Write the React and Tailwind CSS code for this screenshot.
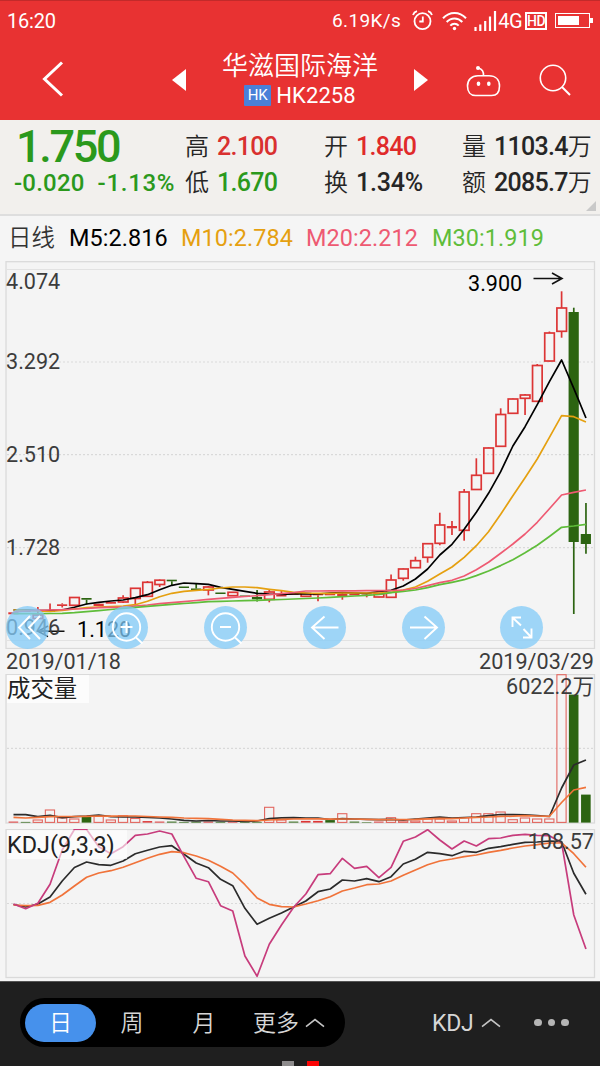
import React from "react";

const RED = "#dc3535";
const GREEN = "#2c6411";

// x position of the n-th trading day
const dayX = (i) => 13.5 + i * 12.18;

// [body top, body bottom, high, low, up]
const candles = [
  [612.3, 614.3, 612, 614, 1],
  [610.2, 612, 610, 612, 1],
  [615, 618.5, 607, 618.5, 1],
  [610.5, 612, 603.5, 612, 1],
  [604.3, 606, 603.3, 607.5, 1],
  [597.5, 605.3, 597.5, 605.3, 1],
  [598, 599.7, 598, 604.5, 0],
  [603.7, 606, 603.5, 606, 1],
  [602, 603.7, 602, 604, 1],
  [598, 602, 595.3, 603, 1],
  [588.3, 598.5, 588, 605.5, 1],
  [582.3, 596.3, 581, 596.5, 1],
  [580.2, 584.5, 579.5, 587, 1],
  [579.7, 581.3, 580, 586, 0],
  [586.5, 588, 586.5, 588, 0],
  [588.5, 590, 584, 590, 0],
  [587, 590, 586, 595.3, 1],
  [592.5, 594, 592.5, 594, 0],
  [592.3, 595.7, 592, 596, 1],
  [595.5, 597, 595.5, 597, 0],
  [597, 599.3, 590, 601.5, 0],
  [592, 599.3, 590, 602.3, 1],
  [594.3, 596.5, 590, 596.5, 1],
  [593.3, 594.8, 593, 595, 1],
  [593.5, 596.3, 593, 596.5, 1],
  [593.3, 595.3, 593, 601.3, 1],
  [593.7, 595.3, 594, 595, 1],
  [593.8, 596, 593, 599.7, 1],
  [593.7, 595.3, 594, 595, 1],
  [593, 594.5, 593, 597.3, 1],
  [593.7, 597, 593, 597.3, 1],
  [580, 597.3, 574.5, 597.5, 1],
  [569, 578.3, 568.5, 580.7, 1],
  [560.7, 567.7, 556.7, 568, 1],
  [543.7, 557.3, 543, 562.7, 1],
  [525, 543.3, 512.7, 545.3, 1],
  [526, 528.3, 521, 535, 1],
  [492, 530.3, 489, 540.7, 1],
  [475.3, 489.5, 458.3, 490, 1],
  [448, 473.3, 447.5, 474, 1],
  [414.5, 446.3, 408.3, 447, 1],
  [399, 413.3, 398.5, 414, 1],
  [395, 398.3, 394, 415, 1],
  [365.5, 401.3, 364, 402, 1],
  [333, 361, 331.5, 361.5, 1],
  [308, 331.3, 291.3, 337.7, 1],
  [312, 542, 307.7, 614, 0],
  [534, 544, 503, 553.7, 0],
];

const ma5 = [610, 610, 610.5, 610.5, 610, 607.3, 604, 602.3, 601, 600, 597.7, 594.7, 589.7, 585.3, 583, 583.7, 584.3, 587.3, 589.3, 591.3, 593.3, 594, 594.3, 594, 593.7, 594, 593, 592.5, 593, 593.3, 591.5, 590.3, 586, 579, 569, 555, 544.3, 529.3, 512.3, 493.3, 471.7, 446, 426.7, 404.7, 381.7, 360, 388.3, 418];
const ma10 = [610, 610.3, 611, 611.5, 610.5, 609, 607.7, 607, 606.5, 606, 604.7, 601.3, 596.7, 593.3, 591.3, 590.3, 589.3, 588, 587, 587, 587.7, 589.3, 590.7, 592.3, 593, 593.3, 593.3, 593, 593, 593, 593, 592.3, 590, 587, 581.3, 574, 567, 557.3, 545.7, 531.7, 514.3, 495.7, 477.7, 459, 437.3, 415.7, 416.7, 422];
const ma20 = [612, 611, 610.3, 610, 609.7, 609, 608.5, 607.7, 607.3, 607, 606, 605, 603.7, 602.7, 601.7, 600.5, 599.3, 598.3, 597.3, 596.5, 595.7, 594.7, 593.7, 592.5, 591, 591, 590.8, 590.8, 590.8, 590.7, 590.7, 590.5, 590, 588.5, 585.7, 582.7, 580.3, 576, 569.7, 562.3, 553.3, 544, 534, 522.3, 508.7, 495, 492.3, 490];
const ma30 = [613.7, 613.7, 613.7, 613.5, 613.3, 612.7, 611.7, 610.7, 609.5, 608.3, 607.3, 606.3, 605.3, 604.3, 603.5, 602.6, 601.7, 601.3, 601, 600.6, 600.3, 599.8, 599.5, 599, 598.5, 598, 597.4, 596.7, 596, 595.3, 594.5, 592.7, 591.5, 590, 587.7, 584.7, 582.3, 579.7, 575.6, 571, 565.6, 559.7, 552.8, 545.3, 536.5, 527.3, 526, 524.3];

// [bar top, up]
const volumes = [
  [822, 1], [822.3, 0], [820, 1], [810, 1], [818, 1], [819, 1], [817, 0], [816, 1],
  [820, 1], [815.7, 1], [818.5, 1], [821.5, 1], [822, 1], [822, 0], [822.3, 0], [822, 0],
  [822, 1], [822.3, 0], [822, 1], [822.3, 0], [822.3, 0], [807.3, 1], [820, 1], [822, 0],
  [821.3, 1], [821.3, 1], [820.5, 0], [813.7, 1], [822, 0], [822.5, 0], [822, 1], [817.7, 1],
  [821, 1], [821, 1], [819, 1], [819, 1], [821, 1], [817.7, 1], [813.7, 1], [813.7, 1],
  [812, 1], [819.7, 1], [818, 1], [819, 1], [819, 1], [674.7, 1], [695, 0], [795, 0],
];
const volMa5 = [814.7, 814.7, 816.7, 815.3, 817.7, 816.7, 816, 815, 816.7, 817, 817, 817.5, 818, 819, 820.3, 821, 820.5, 821, 821, 821.5, 821, 818.7, 817.9, 817.7, 818, 818, 819.5, 818.7, 819, 819.3, 819.7, 819.3, 820, 819, 818, 817, 818, 817.5, 817, 815.7, 814.5, 814.6, 814.8, 815.7, 816.5, 788, 765, 760];
const volMa10 = [817.3, 818, 817.3, 816.7, 816.5, 816.5, 816.3, 816, 816.2, 816, 816, 816.5, 817, 817.3, 818, 818.3, 818.7, 819.3, 820, 820.3, 820.7, 820, 819.3, 819, 818.9, 818.9, 819.2, 819, 819, 819.3, 819.7, 819.7, 819.5, 819.3, 818.8, 818.3, 818.6, 818, 817.3, 817, 816.4, 816.2, 815.7, 816, 816.3, 802.5, 790, 787.3];

const kLine = [904.5, 907, 904, 897, 881, 867.5, 862, 864.7, 865.3, 861, 853.7, 850.3, 847, 845.7, 854.3, 863, 867.7, 879.3, 885.7, 908.3, 924.3, 918.3, 913, 907, 901, 891.7, 889, 880, 881, 878.7, 881.7, 876.7, 864, 859.3, 852.3, 853.7, 855.7, 851.3, 852.3, 848.3, 846.7, 844.3, 842.3, 842, 841, 841.7, 873.3, 894.3];
const dLine = [905, 905.7, 905.3, 902.3, 895, 886, 877.3, 873, 870.7, 867.3, 862.7, 858.3, 854.3, 851.7, 852.7, 856, 860.3, 866.3, 873, 884.7, 898, 904.3, 906.7, 907, 904, 900.7, 896.7, 891, 888, 884.7, 884, 881, 875.3, 870, 864.7, 861, 859, 856.7, 855, 852.3, 850.3, 848, 846, 844.7, 843, 843, 853.7, 867.3];
const jLine = [904, 908.7, 903.3, 884.3, 850, 829.5, 829.5, 846.7, 853.7, 846.7, 835.3, 834, 831, 834, 856.7, 878.3, 881.7, 905.7, 911, 956, 976.3, 944.3, 925, 907.3, 894, 874.7, 873.7, 858.3, 868.3, 866.3, 877.7, 867.3, 841.3, 837, 829.7, 840, 849, 841, 846, 838.7, 838, 835.3, 834.3, 835.3, 835.7, 842.7, 915, 949];

const Line = ({ data, color }) => (
  <polyline
    points={data.map((y, i) => `${dayX(i)},${y}`).join(" ")}
    fill="none"
    stroke={color}
    strokeWidth="1.7"
    strokeLinejoin="round"
  />
);

const Grid = ({ ys }) =>
  ys.map((y) => (
    <line key={y} x1="7" x2="594" y1={y} y2={y} stroke="#d9d9d9" strokeWidth="1.2" strokeDasharray="2 2" />
  ));

const Candle = ({ i, data }) => {
  const [top, bottom, high, low, up] = data;
  const x = dayX(i);
  const color = up ? RED : GREEN;
  const hollow = up && bottom - top > 2.5;
  return (
    <g stroke={color} strokeWidth="1.7">
      {high < top && <line x1={x} x2={x} y1={high} y2={top} />}
      {low > bottom && <line x1={x} x2={x} y1={bottom} y2={low} />}
      {hollow ? (
        <rect x={x - 4.7} y={top} width="9.6" height={bottom - top} fill="none" />
      ) : (
        <rect x={x - 5.2} y={top} width="10.2" height={bottom - top} fill={color} stroke="none" />
      )}
    </g>
  );
};

const Volume = ({ i, data }) => {
  const [top, up] = data;
  const x = dayX(i) - 4.7;
  if (up && top < 821.2) {
    return <rect x={x} y={top} width="9.2" height={822.4 - top} fill="none" stroke="#e2665f" strokeWidth="1.1" />;
  }
  return <rect x={x - 0.2} y={top - 0.4} width="9.6" height={823 - top} fill={up ? RED : GREEN} />;
};

const ToolButton = ({ children }) => (
  <button className="flex size-[43px] items-center justify-center rounded-full bg-[#82cbf8]/75">
    <svg width="43" height="43" viewBox="0 0 43 43" fill="none" stroke="#fff" strokeWidth="1.9">
      {children}
    </svg>
  </button>
);

const Caret = () => (
  <svg width="20" height="10" viewBox="0 0 20 10" fill="none" stroke="#c4c4c4" strokeWidth="1.6">
    <path d="M1 8.7 10 1.6 19 8.7" />
  </svg>
);

const StatusBar = () => (
  <div className="flex h-[40px] items-center justify-between border-t border-[#c22a2a] pl-[7px] pr-[7px] text-[20px] leading-none">
    <span className="tracking-[-0.2px]">16:20</span>
    <div className="flex items-center">
      <span className="mr-[11px] text-[19px] tracking-[0.4px]">6.19K/s</span>
      <svg className="mr-[9px]" width="21" height="21" viewBox="0 0 21 21" fill="none" stroke="#fff" strokeWidth="1.8">
        <circle cx="10.5" cy="11.2" r="8" />
        <path d="M10.8 6.5v5H7.3M1 5C1.6 3.2 3.2 1.7 5 1.2M20 5c-.6-1.8-2.2-3.3-4-3.8" />
      </svg>
      <svg className="mr-[7px]" width="25" height="20" viewBox="0 0 25 20" fill="none" stroke="#fff" strokeWidth="2">
        <path d="M1 7.2c6.5-7 16.5-7 23 0M4.700 11c4.400-4.700 11.200-4.700 15.600 0M8.300 14.600c2.400-2.500 6-2.500 8.400 0" />
        <circle cx="12.5" cy="17.500" r="1.700" fill="#fff" stroke="none" />
      </svg>
      <svg width="23" height="20" viewBox="0 0 23 20" stroke="#fff" strokeWidth="2.200">
        <path d="M1.500 20v-4M6.300 20v-6.500M11.200 20V10M16 20V5.500M21 20V0" />
      </svg>
      <span className="ml-[1px] mr-[3px] text-[20px] tracking-[-0.600px]">4G</span>
      <div className="mr-[8px] flex h-[18px] w-[22px] items-center justify-center border-2 border-white text-[14px] font-medium tracking-[-0.600px]">
        HD
      </div>
      <div className="flex h-[15px] w-[35px] border-[1.500px] border-white p-[2px]">
        <div className="h-full w-[21px] bg-white" />
      </div>
      <div className="h-[5px] w-[3px] bg-white" />
    </div>
  </div>
);

const Header = () => (
  <header className="h-[120px] bg-[#e83232] text-white">
    <StatusBar />
    <div className="flex h-[80px] items-start">
      <svg className="ml-[41px] mt-[21px]" width="23" height="36" viewBox="0 0 23 36" fill="none" stroke="#fff" strokeWidth="3">
        <path d="M21 1.500 3.500 18 21 34.500" />
      </svg>
      <svg className="ml-[108px] mt-[29px]" width="14" height="22" viewBox="0 0 14 22" fill="#fff">
        <path d="M14 0v22L0 11z" />
      </svg>
      <div className="ml-[36px] flex w-[156px] flex-col items-center pt-[11px]">
        <h1 className="whitespace-nowrap text-[26px] font-[350] leading-[30px]">华滋国际海洋</h1>
        <div className="mt-[3px] flex items-center">
          <span className="mr-[5px] flex h-[21px] w-[27px] items-center justify-center rounded-[1px] bg-[#4a80d8] text-[15px] leading-none">
            HK
          </span>
          <span className="text-[22px] font-[450] leading-[23px] tracking-[0.100px]">HK2258</span>
        </div>
      </div>
      <svg className="ml-[36px] mt-[29px]" width="14" height="22" viewBox="0 0 14 22" fill="#fff">
        <path d="M0 0v22l14-11z" />
      </svg>
      <svg className="ml-[38px] mt-[25px]" width="35" height="32" viewBox="0 0 35 32" fill="none" stroke="#fff" strokeWidth="1.600">
        <path d="M12 10.800h11c6.500 0 10.500 4 10.500 10.200 0 6-3 9.500-8 9.500h-16c-5 0-8-3.500-8-9.500 0-6.200 4-10.200 10.500-10.200zM17.500 10.800c.3-4-1.500-6.800-5-7.800" />
        <circle cx="12" cy="3" r="2" fill="#fff" stroke="none" />
        <ellipse cx="12.500" cy="18.800" rx="1.800" ry="2.300" fill="#fff" stroke="none" />
        <ellipse cx="22.800" cy="18.800" rx="1.800" ry="2.300" fill="#fff" stroke="none" />
      </svg>
      <svg className="ml-[38px] mt-[24px]" width="32" height="32" viewBox="0 0 32 32" fill="none" stroke="#fff" strokeWidth="1.600">
        <circle cx="14" cy="14" r="12.700" />
        <path d="m23 23 8 8" strokeWidth="2" />
      </svg>
    </div>
  </header>
);

const Quote = ({ label, value, unit, className }) => (
  <div className="flex h-[36px] items-center whitespace-nowrap">
    <span className="mr-[8px] text-[24px] font-[350]">{label}</span>
    <span className={`text-[25px] font-medium ${className}`}>{value}</span>
    {unit && <span className="text-[24px] font-[350]">{unit}</span>}
  </div>
);

const QuotePanel = () => (
  <section className="flex h-[96px] border-b-2 border-[#dedede] bg-[#f2f0ed] text-[#262626]">
    <div className="w-[185px] pl-[14px] font-medium text-[#2b991c]">
      <div className="h-[48px] pl-[2px] pt-[6px] text-[45px] leading-[42px] tracking-[-2.300px]">1.750</div>
      <div className="flex h-[30px] items-center gap-[13px] whitespace-nowrap text-[24px] leading-[26px]">
        <span className="tracking-[0.200px]">-0.020</span>
        <span className="tracking-[0.700px]">-1.13%</span>
      </div>
    </div>
    <div className="w-[139px] pt-[9px]">
      <Quote label="高" value="2.100" className="tracking-[-0.700px] text-[#d9302f]" />
      <Quote label="低" value="1.670" className="tracking-[-0.700px] text-[#2b991c]" />
    </div>
    <div className="w-[138px] pt-[9px]">
      <Quote label="开" value="1.840" className="tracking-[-0.700px] text-[#e02a2a]" />
      <Quote label="换" value="1.34%" className="tracking-[-0.200px]" />
    </div>
    <div className="w-[134px] pt-[9px]">
      <Quote label="量" value="1103.4" unit="万" className="tracking-[-0.700px]" />
      <Quote label="额" value="2085.7" unit="万" className="tracking-[-0.700px]" />
    </div>
    <svg className="mt-[81px] shrink-0 -ml-[10px]" width="10" height="10" viewBox="0 0 10 10" fill="#c9c9c9">
      <path d="M10 0v10H0z" />
    </svg>
  </section>
);

const Averages = () => (
  <div className="flex h-[45px] items-center whitespace-nowrap pl-[8px] text-[23.400px] leading-none tracking-[0.100px]">
    <span className="w-[61px] font-[350] text-[#333]">日线</span>
    <span className="w-[112px] text-black">M5:2.816</span>
    <span className="w-[125px] text-[#e5a010]">M10:2.784</span>
    <span className="w-[126px] text-[#ee5a72]">M20:2.212</span>
    <span className="text-[#5fbd3a]">M30:1.919</span>
  </div>
);

const PriceChart = () => (
  <section className="relative h-[388px]">
    <svg className="block" width="600" height="388" viewBox="0 261 600 388">
      <rect x="6" y="261.700" width="588.500" height="386.800" fill="#f4f4f4" stroke="#dadada" strokeWidth="1.300" />
      <line x1="7" x2="594" y1="269.500" y2="269.500" stroke="#e2e2e2" />
      <line x1="7" x2="594" y1="640.500" y2="640.500" stroke="#e2e2e2" />
      <Grid ys={[362, 454.700, 547.700]} />
      {candles.map((c, i) => (
        <Candle key={i} i={i} data={c} />
      ))}
      <Line data={ma5} color="#000" />
      <Line data={ma10} color="#e5a010" />
      <Line data={ma20} color="#ee5a72" />
      <Line data={ma30} color="#5fbd3a" />
      <g fill="none" stroke="#111" strokeWidth="1.600">
        <path d="M533.500 278.500H562M552 273l10 5.500-10 5.500" />
        <path d="M64.500 631.300H38M48 626l-10 5.300 10 5.300" />
      </g>
    </svg>
    <div className="absolute inset-0 text-[21.600px] leading-[24px] text-[#3c3c3c]">
      <span className="absolute left-[6px] top-[9px]">4.074</span>
      <span className="absolute left-[6px] top-[89px]">3.292</span>
      <span className="absolute left-[6px] top-[182px]">2.510</span>
      <span className="absolute left-[6px] top-[275px]">1.728</span>
      <span className="absolute left-[6px] top-[355px]">0.946</span>
      <span className="absolute left-[468px] top-[11px] text-black">3.900</span>
      <span className="absolute left-[77px] top-[357px] text-black">1.120</span>
    </div>
    <div className="absolute left-[6px] top-[345px] flex gap-[55.900px]">
      <ToolButton>
        <path d="M24 10 13 21.500 24 33M34 10 23 21.500 34 33" />
      </ToolButton>
      <ToolButton>
        <circle cx="21.500" cy="21" r="13.700" />
        <path d="M15.500 21h12M21.500 15v12M31 31.500l6.500 6" />
      </ToolButton>
      <ToolButton>
        <circle cx="21.500" cy="21" r="13.700" />
        <path d="M16 21h11M31 31.500l6.500 6" />
      </ToolButton>
      <ToolButton>
        <path d="M35.500 21.500H9M21.500 10.500 9 21.500l12.500 11.500" />
      </ToolButton>
      <ToolButton>
        <path d="M8 21.500h26.500M22.500 10.500l12.500 11-12.500 11.500" />
      </ToolButton>
      <ToolButton>
        <path d="M21 19.500 12.500 11.500M21 11.500h-8.500v9.500M23.500 23l8 8.500M31.500 22.500v9H23" />
      </ToolButton>
    </div>
  </section>
);

const VolumeChart = () => (
  <section className="relative h-[155px]">
    <svg className="block" width="600" height="150" viewBox="0 674 600 150">
      <rect x="6" y="674.500" width="588.500" height="148.500" fill="#f4f4f4" stroke="#dadada" strokeWidth="1.300" />
      <Grid ys={[748.300]} />
      {volumes.map((v, i) => (
        <Volume key={i} i={i} data={v} />
      ))}
      <Line data={volMa5} color="#2b2b2b" />
      <Line data={volMa10} color="#f0733a" />
    </svg>
    <span className="absolute left-[7px] top-[1px] h-[28px] w-[82px] bg-white/70 text-[23.400px] leading-[29px] text-[#222]">
      成交量
    </span>
    <span className="absolute right-[6px] top-0 text-[21.600px] leading-[26px] text-[#3c3c3c]">6022.2万</span>
  </section>
);

const KdjChart = () => (
  <section className="relative h-[152px]">
    <svg className="block" width="600" height="150" viewBox="0 829 600 150">
      <rect x="6" y="829.500" width="588.500" height="148" fill="#f4f4f4" stroke="#dadada" strokeWidth="1.300" />
      <Grid ys={[903.500]} />
      <Line data={kLine} color="#2b2b2b" />
      <Line data={dLine} color="#f0733a" />
      <Line data={jLine} color="#c73c7c" />
    </svg>
    <span className="absolute left-[7px] top-[1px] h-[29px] w-[120px] bg-white/60 text-[23.400px] leading-[30px] text-[#222]">
      KDJ(9,3,3)
    </span>
    <span className="absolute right-[6px] top-[1px] text-[21.600px] leading-[24px] text-[#3c3c3c]">108.57</span>
  </section>
);

const BottomBar = () => (
  <footer className="h-[86px] overflow-hidden border-t border-[#555] bg-[#1f1f1f] text-[#d6d6d6]">
    <div className="flex items-center pt-[16px] text-[23px] font-[350] leading-none">
      <nav className="ml-[20px] flex h-[49px] w-[325px] items-center rounded-full bg-black pl-[5px]">
        <button className="h-[38px] w-[71px] rounded-full bg-[#4691ec] pt-[2px] text-white">日</button>
        <button className="w-[72px] pt-[2px]">周</button>
        <button className="w-[72px] pt-[2px]">月</button>
        <button className="ml-[13px] flex items-center gap-[6px] pt-[1px]">
          更多
          <Caret />
        </button>
      </nav>
      <button className="ml-[87px] flex items-center gap-[8px] pt-[1px] text-[23px] font-normal">
        <span className="tracking-[-0.300px]">KDJ</span>
        <Caret />
      </button>
      <div className="ml-[33px] flex gap-[6px]">
        <i className="size-[7.500px] rounded-full bg-[#b5b5b5]" />
        <i className="size-[7.500px] rounded-full bg-[#b5b5b5]" />
        <i className="size-[7.500px] rounded-full bg-[#b5b5b5]" />
      </div>
    </div>
    <div className="mt-[14px] flex justify-center gap-[13px]">
      <i className="h-[6px] w-[12px] bg-[#8d8b8c]" />
      <i className="h-[6px] w-[12px] bg-[#fb0505]" />
    </div>
  </footer>
);

const App = () => {
  return (
    <div className="h-[1066px] w-[600px] overflow-hidden bg-[#f5f5f5] font-['Roboto','Noto_Sans_CJK_SC',sans-serif]">
      <Header />
      <QuotePanel />
      <Averages />
      <PriceChart />
      <div className="flex h-[25px] items-center justify-between px-[6px] text-[21.600px] leading-none text-[#3c3c3c]">
        <span>2019/01/18</span>
        <span>2019/03/29</span>
      </div>
      <VolumeChart />
      <KdjChart />
      <BottomBar />
    </div>
  );
};

export default App;
